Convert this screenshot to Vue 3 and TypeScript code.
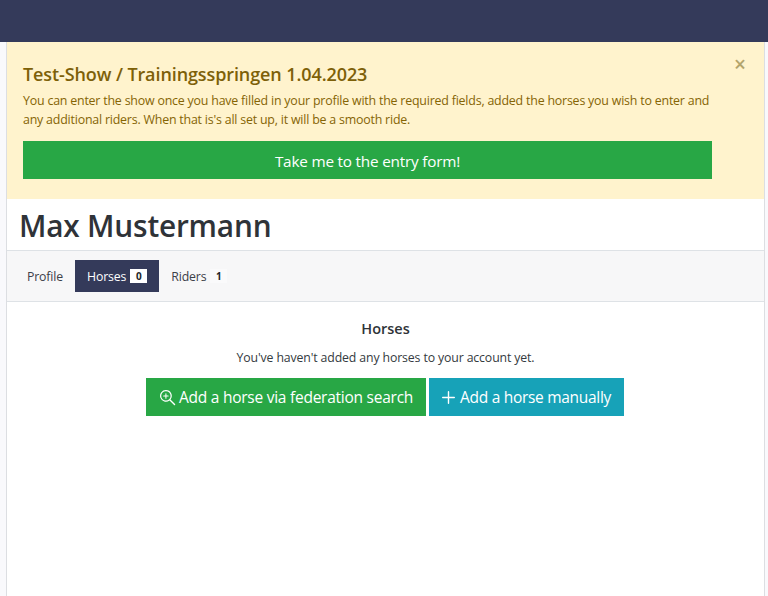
<template>
  <div class="page">
    <header class="topbar"></header>
    <main class="panel">
      <div class="alert">
        <button class="close" type="button">×</button>
        <h4 class="alert-title">{{ show }}</h4>
        <p class="alert-text">
          You can enter the show once you have filled in your profile with the required fields, added the horses you wish to enter and any additional riders. When that is's all set up, it will be a smooth ride.
        </p>
        <a class="entry-btn">Take me to the entry form!</a>
      </div>

      <h1 class="name">Max Mustermann</h1>

      <nav class="tabs">
        <a
          v-for="tab in tabs"
          :key="tab.label"
          class="tab"
          :class="{ active: tab.label === activeTab }"
        >
          {{ tab.label }}
          <span v-if="tab.count !== undefined" class="badge">{{ tab.count }}</span>
        </a>
      </nav>

      <section class="content">
        <h5 class="content-title">Horses</h5>
        <p class="content-text">You've haven't added any horses to your account yet.</p>
        <div class="actions">
          <a class="btn green">
            <svg class="icon" viewBox="0 0 16 16" fill="currentColor">
              <path d="M6.5 1a5.5 5.5 0 1 0 3.4 9.82l4.25 4.25a.65.65 0 0 0 .92-.92l-4.25-4.25A5.5 5.5 0 0 0 6.5 1zm0 1.1a4.4 4.4 0 1 1 0 8.8 4.4 4.4 0 0 1 0-8.8z" />
              <path d="M6.5 3.9a.5.5 0 0 1 .5.5V6h1.6a.5.5 0 0 1 0 1H7v1.6a.5.5 0 0 1-1 0V7H4.4a.5.5 0 0 1 0-1H6V4.4a.5.5 0 0 1 .5-.5z" />
            </svg>
            Add a horse via federation search
          </a>
          <a class="btn teal">
            <svg class="icon plus" viewBox="1.5 1.5 13 13" fill="currentColor">
              <path d="M8 1.5a.7.7 0 0 1 .7.7v5.1h5.1a.7.7 0 0 1 0 1.4H8.700v5.100a.7.7 0 0 1-1.400 0V8.700H2.200a.7.7 0 0 1 0-1.400h5.100V2.200a.7.7 0 0 1 .7-.7z" />
            </svg>
            Add a horse manually
          </a>
        </div>
      </section>
    </main>
  </div>
</template>

<script setup lang="ts">
interface Tab {
  label: string
  count?: number
}

const show = 'Test-Show / Trainingsspringen 1.04.2023'
const activeTab = 'Horses'

const tabs: Tab[] = [
  { label: 'Profile' },
  { label: 'Horses', count: 0 },
  { label: 'Riders', count: 1 },
]
</script>

<style>
html,
body {
  margin: 0;
  background: #fff;
}
</style>

<style scoped>
.page {
  height: 596px;
  overflow: hidden;
  font-family: "Open Sans", "Noto Sans", sans-serif;
  color: #212529;
  background: #f9f9fc;
}

.topbar {
  height: 42px;
  background: #343a5a;
}

.panel {
  margin: 0 3px 0 6px;
  height: 554px;
  background: #fff;
  border-left: 1px solid #dcdee2;
  border-right: 1px solid #dcdee2;
}

.alert {
  position: relative;
  height: 157px;
  box-sizing: border-box;
  padding: 21px 52px 0 16px;
  background: #fff3cd;
  color: #856404;
}

.close {
  position: absolute;
  top: 10px;
  right: 18px;
  padding: 0;
  border: 0;
  background: none;
  color: #b3a46c;
  font-family: inherit;
  font-size: 21px;
  font-weight: 600;
  line-height: 24px;
}

.alert-title {
  margin: 0 0 6px;
  color: #7d6008;
  font-size: 18px;
  font-weight: 600;
  line-height: 22px;
  letter-spacing: -0.1px;
}

.alert-text {
  margin: 0 0 12px;
  font-size: 12.4px;
  line-height: 19px;
  letter-spacing: -0.2px;
}

.entry-btn {
  display: block;
  height: 38px;
  background: #28a745;
  color: #fff;
  font-size: 15.3px;
  line-height: 40px;
  text-align: center;
  letter-spacing: -0.2px;
}

.name {
  margin: 0;
  height: 51px;
  box-sizing: border-box;
  padding-left: 12px;
  color: #2f3338;
  font-size: 29.8px;
  font-weight: 600;
  line-height: 53px;
  letter-spacing: -0.2px;
}

.tabs {
  display: flex;
  height: 52px;
  box-sizing: border-box;
  padding: 9px 8px 0 7px;
  background: #f7f7f8;
  border-top: 1px solid #dee2e6;
  border-bottom: 1px solid #dee2e6;
}

.tab {
  display: flex;
  align-items: center;
  gap: 4px;
  height: 32px;
  padding: 0 12px;
  font-size: 12.3px;
  color: #3c4048;
  letter-spacing: -0.15px;
}

.tab:first-child {
  padding-left: 13px;
}

.tab.active {
  background: #343a5a;
  color: #fff;
}

.badge {
  width: 17px;
  height: 14px;
  background: #fff;
  color: #212529;
  font-size: 10px;
  font-weight: 700;
  line-height: 14px;
  text-align: center;
}

.tab:not(.active) .badge {
  background: #fafafb;
}

.content {
  display: flex;
  flex-direction: column;
  align-items: center;
}

.content-title {
  margin: 17px 0 0;
  color: #2f3338;
  font-size: 14.5px;
  font-weight: 600;
  line-height: 20px;
}

.content-text {
  margin: 10px 0 0;
  color: #343a40;
  font-size: 12.3px;
  line-height: 18px;
  letter-spacing: -0.13px;
}

.actions {
  display: flex;
  gap: 3px;
  margin: 11px 1px 0 0;
}

.btn {
  display: flex;
  align-items: center;
  gap: 4px;
  height: 38px;
  box-sizing: border-box;
  padding: 0 13px;
  color: #fff;
  font-size: 15.5px;
}

.green {
  gap: 3px;
  background: #28a745;
  letter-spacing: -0.25px;
}

.teal {
  gap: 5px;
  background: #17a2b8;
  letter-spacing: -0.3px;
}

.icon {
  width: 17px;
  height: 17px;
  flex: none;
}

.icon.plus {
  width: 13px;
  height: 13px;
}
</style>
